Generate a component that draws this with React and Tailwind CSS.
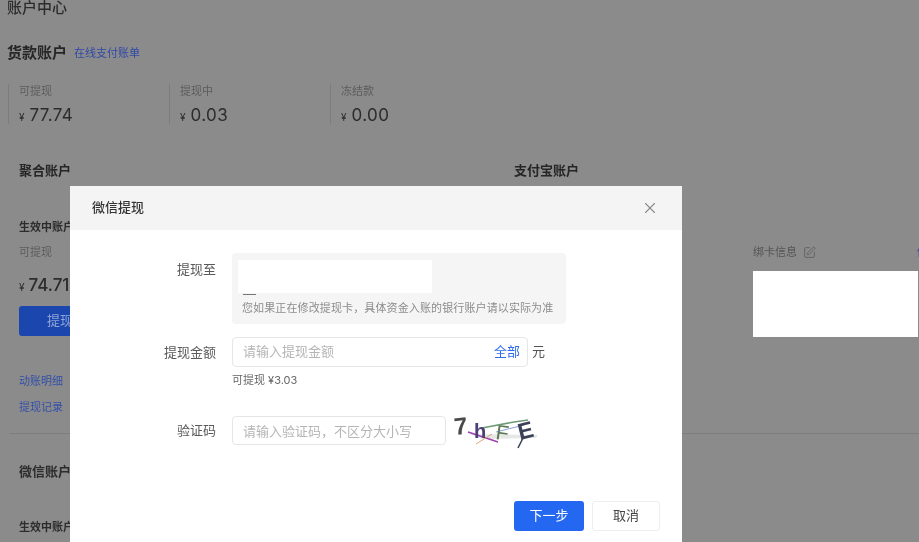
import React from "react";
import { X, SquarePen } from "lucide-react";

const Stat = ({ label, value }) => (
  <div className="w-[161px] h-[40px] border-l border-[#7c7c7c] pl-[10px]">
    <div className="text-[11px] leading-[14px] text-[#5c5c5c]">{label}</div>
    <div className="mt-[6px] flex items-baseline gap-[5px] text-[#2c2c2c]">
      <span className="text-[10px]">¥</span>
      <span className="text-[17px] leading-[22px] tracking-[0.4px]">{value}</span>
    </div>
  </div>
);

const FormLabel = ({ children }) => (
  <label className="block w-[146px] shrink-0 mr-[16px] text-right text-[13px] leading-[16px] text-[#595959]">
    {children}
  </label>
);

const Captcha = () => (
  <svg width="88" height="45" viewBox="0 0 88 45" className="ml-[6px]">
    <path d="M18 26 L86 27 L84 30 L30 31Z" fill="#e6e8e6" />
    <path d="M16 24 L46 34" stroke="#a03fb0" strokeWidth="1.5" fill="none" />
    <path d="M24 36 L40 26" stroke="#d9a77c" strokeWidth="1" fill="none" />
    <path d="M30 20 L62 14 L76 12" stroke="#6f9a78" strokeWidth="1.5" fill="none" />
    <path d="M44 24 L72 17" stroke="#8aa6d8" strokeWidth="1.2" fill="none" />
    <text x="3" y="27" fontSize="24" fontWeight="700" fill="#4a4a4a" fontFamily="Liberation Sans" transform="rotate(-6 3 27)">7</text>
    <text x="22" y="30" fontSize="20" fontWeight="700" fill="#4b3f78" fontFamily="Liberation Sans">h</text>
    <text x="43" y="31" fontSize="21" fill="#5f7a55" fontFamily="Liberation Sans" transform="rotate(8 43 31)">F</text>
    <text x="68" y="32" fontSize="23" fontWeight="700" fill="#3c4058" fontFamily="Liberation Sans" transform="rotate(-14 68 32)">E</text>
    <path d="M72 28 L66 40" stroke="#3c4058" strokeWidth="1.5" fill="none" />
  </svg>
);

const WithdrawDialog = () => (
  <div className="absolute left-[70px] top-[186px] bottom-0 w-[612px] bg-white rounded-t-[3px]">
    <div className="flex items-center justify-between h-[44px] pl-[22px] pr-[23px] bg-[#f4f4f4]">
      <h2 className="text-[13px] font-medium text-[#333333]">微信提现</h2>
      <X className="w-[18px] h-[18px] text-[#8a8a8a]" strokeWidth={1.5} />
    </div>

    <div className="pt-[23px]">
      <div className="flex items-start">
        <div className="pt-[8px]">
          <FormLabel>提现至</FormLabel>
        </div>
        <div className="w-[334px] h-[71px] rounded-[4px] bg-[#f5f5f5] pt-[7px] pl-[6px]">
          <div className="w-[194px] h-[33px] bg-white" />
          <div className="ml-[5px] mt-[1px] w-[13px] h-px bg-[#777777]" />
          <p className="ml-[4px] mt-[6px] text-[11px] leading-[14px] tracking-[0.12px] text-[#8c8c8c] whitespace-nowrap">
            您如果正在修改提现卡，具体资金入账的银行账户请以实际为准
          </p>
        </div>
      </div>

      <div className="flex items-center mt-[13px]">
        <FormLabel>提现金额</FormLabel>
        <div className="flex items-center w-[296px] h-[30px] rounded-[4px] border border-[#e6e6e6] pl-[10px] pr-[7px]">
          <input
            placeholder="请输入提现金额"
            className="flex-1 min-w-0 text-[13px] outline-none placeholder:text-[#b5b5b5]"
          />
          <span className="text-[13px] text-[#2f6bf0]">全部</span>
        </div>
        <span className="ml-[4px] text-[13px] text-[#555555]">元</span>
      </div>
      <div className="ml-[162px] mt-[6px] text-[11px] leading-[14px] text-[#666666]">可提现 ¥3.03</div>

      <div className="flex items-center mt-[29px] h-[29px]">
        <div className="pb-[2px]">
          <FormLabel>验证码</FormLabel>
        </div>
        <input
          placeholder="请输入验证码，不区分大小写"
          className="w-[214px] h-[29px] rounded-[4px] border border-[#e6e6e6] px-[10px] text-[13px] outline-none placeholder:text-[#b5b5b5]"
        />
        <Captcha />
      </div>

      <div className="flex justify-end gap-[8px] mt-[56px] pr-[22px]">
        <button className="w-[70px] h-[30px] rounded-[3px] bg-[#2468f2] text-[13px] text-white">下一步</button>
        <button className="w-[68px] h-[30px] rounded-[3px] border border-[#eeeeee] bg-white text-[13px] text-[#444444]">取消</button>
      </div>
    </div>
  </div>
);

const App = () => {
  return (
    <div className="relative w-[919px] h-[542px] overflow-hidden bg-[#8c8b8c] blur-[0.4px] font-['Inter','Noto_Sans_CJK_SC',sans-serif]">
      <div className="pl-[7px] h-[15px] text-[15px] leading-[15px] font-medium text-[#2c2c2c]">账户中心</div>

      <div className="mt-[28px] pl-[7px] flex items-center gap-[7px] h-[20px]">
        <span className="text-[15px] font-semibold text-[#262626]">货款账户</span>
        <a className="text-[11px] text-[#2f4aa6]">在线支付账单</a>
      </div>

      <div className="mt-[21px] ml-[8px] flex">
        <Stat label="可提现" value="77.74" />
        <Stat label="提现中" value="0.03" />
        <Stat label="冻结款" value="0.00" />
      </div>

      <div className="mt-[38px] ml-[19px] flex h-[271px]">
        <div className="w-[495px] shrink-0">
          <div className="text-[13px] leading-[16px] font-semibold text-[#262626]">聚合账户</div>
          <div className="mt-[42px] text-[11px] leading-[14px] font-semibold text-[#2c2c2c]">生效中账户</div>
          <div className="mt-[11px] text-[11px] leading-[14px] text-[#5c5c5c]">可提现</div>
          <div className="mt-[14px] flex items-baseline gap-[4px] h-[24px] text-[#2c2c2c]">
            <span className="text-[10px]">¥</span>
            <span className="text-[17px] leading-[24px] font-medium">74.71</span>
          </div>
          <button className="mt-[9px] w-[120px] h-[30px] rounded-[3px] bg-[#1a46ad] pl-[11px] text-left text-[13px] text-[#8fa3d6]">
            <span className="ml-[17px]">提现</span>
          </button>
          <div className="mt-[38px] text-[11px] leading-[14px] text-[#3350a8]">动账明细</div>
          <div className="mt-[12px] text-[11px] leading-[14px] text-[#3350a8]">提现记录</div>
        </div>

        <div className="flex-1">
          <div className="text-[13px] leading-[16px] font-semibold text-[#262626]">支付宝账户</div>
          <div className="mt-[67px] ml-[239px]">
            <div className="flex items-center h-[14px] whitespace-nowrap">
              <span className="shrink-0 text-[11px] text-[#555555]">绑卡信息</span>
              <SquarePen className="shrink-0 ml-[6px] w-[13px] h-[13px] text-[#5c5c5c]" strokeWidth={1.5} />
              <span className="ml-[101px] shrink-0 text-[11px] text-[#2f4aa6]">修改</span>
            </div>
            <div className="mt-[12px] w-[165px] h-[66px] bg-white" />
          </div>
        </div>
      </div>

      <div className="ml-[10px] h-px bg-[#7d7d7d]" />

      <div className="ml-[19px] mt-[29px] text-[13px] leading-[16px] font-semibold text-[#2c2c2c]">微信账户</div>
      <div className="ml-[19px] mt-[41px] text-[11px] leading-[14px] font-semibold text-[#2c2c2c]">生效中账户</div>

      <WithdrawDialog />
    </div>
  );
};

export default App;
